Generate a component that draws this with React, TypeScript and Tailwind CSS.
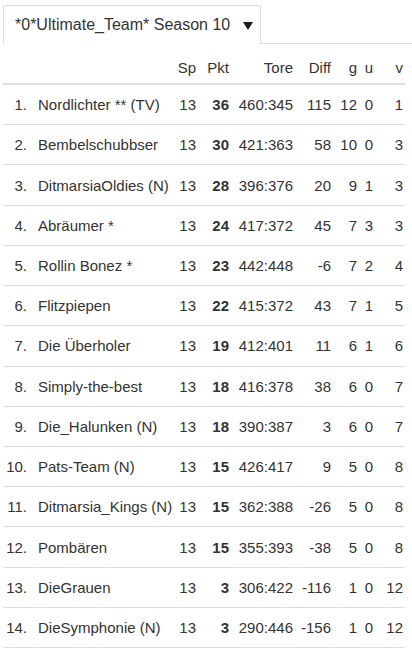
import React from "react";

type Row = [number, string, number, number, string, number, number, number, number];

const rows: Row[] = [
  [1, "Nordlichter ** (TV)", 13, 36, "460:345", 115, 12, 0, 1],
  [2, "Bembelschubbser", 13, 30, "421:363", 58, 10, 0, 3],
  [3, "DitmarsiaOldies (N)", 13, 28, "396:376", 20, 9, 1, 3],
  [4, "Abräumer *", 13, 24, "417:372", 45, 7, 3, 3],
  [5, "Rollin Bonez *", 13, 23, "442:448", -6, 7, 2, 4],
  [6, "Flitzpiepen", 13, 22, "415:372", 43, 7, 1, 5],
  [7, "Die Überholer", 13, 19, "412:401", 11, 6, 1, 6],
  [8, "Simply-the-best", 13, 18, "416:378", 38, 6, 0, 7],
  [9, "Die_Halunken (N)", 13, 18, "390:387", 3, 6, 0, 7],
  [10, "Pats-Team (N)", 13, 15, "426:417", 9, 5, 0, 8],
  [11, "Ditmarsia_Kings (N)", 13, 15, "362:388", -26, 5, 0, 8],
  [12, "Pombären", 13, 15, "355:393", -38, 5, 0, 8],
  [13, "DieGrauen", 13, 3, "306:422", -116, 1, 0, 12],
  [14, "DieSymphonie (N)", 13, 3, "290:446", -156, 1, 0, 12],
];

const cols = "grid grid-cols-[24px_143px_26px_33px_64px_38px_26px_16px_30px_2px]";

export default function App() {
  return (
    <div className="w-[412px] h-[651px] bg-white text-[#333] font-['Liberation_Sans',Arial,sans-serif] overflow-hidden">
      <div className="flex pt-[5px] pl-[3px]">
        <div className="w-[258px] h-[39px] border border-b-0 border-[#ddd] flex items-center pl-[11px] text-[16px] leading-none">
          <span>*0*Ultimate_Team* Season 10</span>
          <svg className="ml-[13px] mt-[1px]" width="10" height="8" viewBox="0 0 10 8">
            <polygon points="0,0 10,0 5,8" fill="#1a1a1a" />
          </svg>
        </div>
        <div className="flex-1 h-[39px] border-b border-[#ddd]" />
      </div>
      <div className="ml-[3px] w-[402px] text-[15px]">
        <div className={`${cols} h-[41px] border-b-2 border-[#ddd] items-end pb-[5px] leading-[21px]`}>
          <div />
          <div />
          <div className="text-right">Sp</div>
          <div className="text-right">Pkt</div>
          <div className="text-right">Tore</div>
          <div className="text-right">Diff</div>
          <div className="text-right">g</div>
          <div className="text-right">u</div>
          <div className="text-right">v</div>
          <div />
        </div>
        {rows.map((r) => (
          <div key={r[0]} className={`${cols} h-[40.23px] border-b border-[#ddd] items-center leading-[21px]`}>
            <div className="text-right">{r[0]}.</div>
            <div className="pl-[11px] whitespace-nowrap">{r[1]}</div>
            <div className="text-right">{r[2]}</div>
            <div className="text-right font-bold">{r[3]}</div>
            <div className="text-right">{r[4]}</div>
            <div className="text-right">{r[5]}</div>
            <div className="text-right">{r[6]}</div>
            <div className="text-right">{r[7]}</div>
            <div className="text-right">{r[8]}</div>
            <div />
          </div>
        ))}
      </div>
    </div>
  );
}
